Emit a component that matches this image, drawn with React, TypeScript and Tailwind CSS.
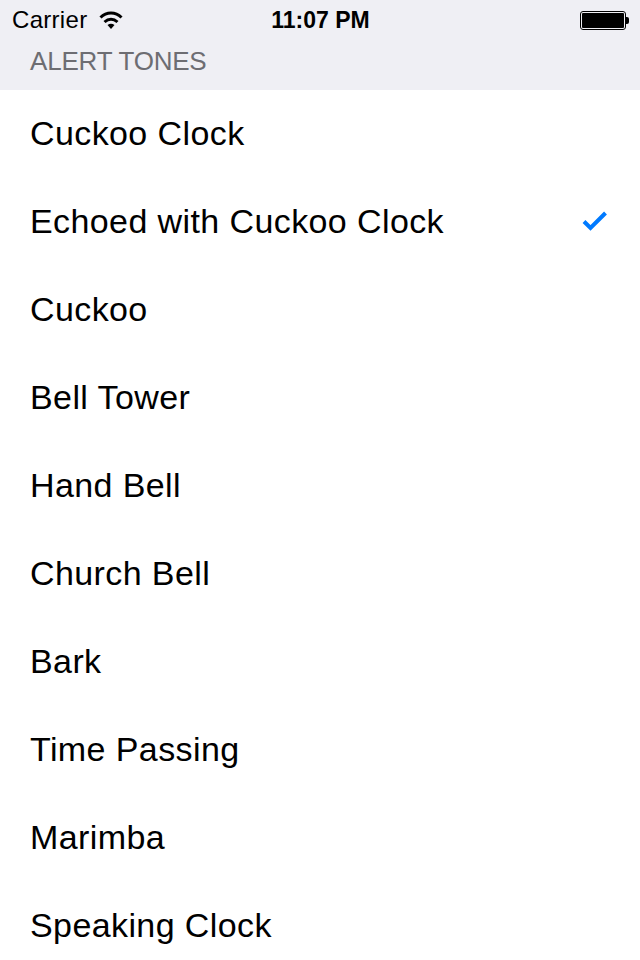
import React from 'react';

const tones = [
  'Cuckoo Clock',
  'Echoed with Cuckoo Clock',
  'Cuckoo',
  'Bell Tower',
  'Hand Bell',
  'Church Bell',
  'Bark',
  'Time Passing',
  'Marimba',
  'Speaking Clock',
];

const Wifi = () => (
  <svg width="24" height="20" viewBox="0 0 24 20" className="ml-3">
    <path d="M1.5 7.5 C7.5 1.5 16.5 1.5 22.5 7.5" fill="none" stroke="#000" strokeWidth="3" />
    <path d="M5.5 12 C9.5 8.4 14.5 8.4 18.5 12" fill="none" stroke="#000" strokeWidth="3" />
    <path d="M8.5 15 C10.8 13.2 13.2 13.2 15.5 15 L12 19 Z" fill="#000" />
  </svg>
);

const Battery = () => (
  <div className="flex items-center">
    <div className="w-[46px] h-[19px] rounded-[3px] border border-black p-[1px] bg-[#efeff4]">
      <div className="w-full h-full bg-black rounded-[1px]" />
    </div>
    <div className="w-[3px] h-[7px] bg-black rounded-r-[2px]" />
  </div>
);

const App: React.FC = () => {
  return (
    <div className="w-[640px] h-[960px] overflow-hidden bg-white font-['Liberation_Sans',Arial,sans-serif]">
      {/* Header */}
      <div className="h-[90px] bg-[#efeff4]">
        <div className="h-[40px] pl-3 pr-[11px] grid grid-cols-3 items-center text-black text-[24px] leading-none">
          <div className="flex items-center">
            <span className="tracking-[0.3px]">Carrier</span>
            <Wifi />
          </div>
          <div className="text-center font-bold text-[23px]">11:07 PM</div>
          <div className="flex justify-end">
            <Battery />
          </div>
        </div>
        <div className="h-[42px] pl-[30px] flex items-center text-[26px] leading-none tracking-[-0.2px] text-[#6d6d72]">
          ALERT TONES
        </div>
      </div>

      {/* List */}
      <div>
        {tones.map((name) => (
          <div key={name} className="h-[88px] pl-[30px] pr-[31px] pb-[2px] flex items-center justify-between">
            <span className="text-[34px] leading-none tracking-[0.4px] text-black">{name}</span>
            {name === 'Echoed with Cuckoo Clock' && (
              <svg width="28" height="22" viewBox="0 0 28 22">
                <path d="M3 11.5 L9.5 18 L24.5 3" fill="none" stroke="#007aff" strokeWidth="4" />
              </svg>
            )}
          </div>
        ))}
      </div>
    </div>
  );
};

export default App;
